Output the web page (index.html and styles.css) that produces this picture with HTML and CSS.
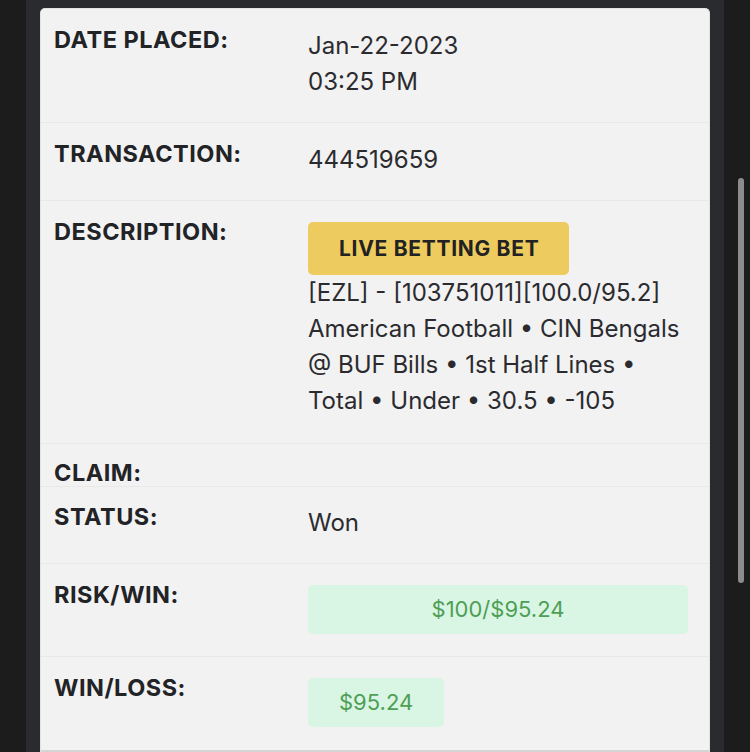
FILE: index.html
```html
<!DOCTYPE html>
<html lang="en">
<head>
<meta charset="utf-8">
<title>Bet details</title>
<link rel="stylesheet" href="styles.css">
</head>
<body>
<div class="panel">
  <div class="card">
    <div class="row">
      <div class="label">DATE PLACED:</div>
      <div class="value">Jan-22-2023<br>03:25 PM</div>
    </div>
    <div class="row">
      <div class="label">TRANSACTION:</div>
      <div class="value">444519659</div>
    </div>
    <div class="row row-desc">
      <div class="label">DESCRIPTION:</div>
      <div class="value">
        <div class="badge">LIVE BETTING BET</div>
        <div class="desc">[EZL] - [103751011][100.0/95.2] American Football • CIN Bengals @ BUF Bills • 1st Half Lines • Total • Under • 30.5 • -105</div>
      </div>
    </div>
    <div class="row row-claim">
      <div class="label">CLAIM:</div>
      <div class="value"></div>
    </div>
    <div class="row row-status">
      <div class="label">STATUS:</div>
      <div class="value">Won</div>
    </div>
    <div class="row">
      <div class="label">RISK/WIN:</div>
      <div class="value"><div class="money money-full">$100/$95.24</div></div>
    </div>
    <div class="row">
      <div class="label">WIN/LOSS:</div>
      <div class="value"><div class="money">$95.24</div></div>
    </div>
    <div class="row-end"></div>
  </div>
</div>
<div class="scroll-thumb"></div>
</body>
</html>
```
FILE: styles.css
```css
html, body {
  margin: 0;
  padding: 0;
  height: 100%;
  overflow: hidden;
}
body {
  background: #1c1c1c;
  font-family: Inter, "Noto Sans", sans-serif;
}
.panel {
  margin-left: 26px;
  width: 670px;
  height: 744px;
  padding: 8px 14px 0;
  background: #2a2b2e;
}
.card {
  background: #f2f2f2;
  border: 1px solid #e2e2e2;
  border-bottom: none;
  border-radius: 5px 5px 0 0;
  height: 760px;
}
.row {
  display: grid;
  grid-template-columns: 254px 380px;
  padding: 19px 22px 22px 13px;
  border-top: 1px solid #e8e8e8;
}
.row:first-child {
  border-top: none;
}
.label {
  font-weight: 700;
  font-size: 23.5px;
  line-height: 24px;
  color: #222326;
  letter-spacing: 0.5px;
}
.value {
  font-size: 24px;
  line-height: 36px;
  color: #2b2b2f;
}
.row-desc {
  padding-bottom: 24px;
}
.badge {
  display: inline-block;
  margin-top: 2px;
  height: 53px;
  line-height: 53px;
  padding: 0 30px 0 31px;
  background: #eecb5f;
  border-radius: 5px;
  font-weight: 700;
  font-size: 21px;
  letter-spacing: 0.7px;
  color: #222;
}
.row-claim {
  padding-top: 17px;
  padding-bottom: 1px;
}
.row-claim .value {
  line-height: 24px;
}
.row-status {
  padding-top: 18px;
}
.money {
  display: inline-block;
  margin-top: 2px;
  height: 49px;
  line-height: 49px;
  padding: 0 31px;
  background: #d9f5e3;
  border-radius: 5px;
  color: #4e9f55;
  font-size: 22px;
  text-align: center;
}
.money-full {
  display: block;
}
.row-end {
  border-top: 3px solid #d4d4d4;
  margin-top: 1px;
}
.scroll-thumb {
  position: absolute;
  left: 738px;
  top: 178px;
  width: 6px;
  height: 405px;
  border-radius: 3px;
  background: #8c8c8c;
}
```
